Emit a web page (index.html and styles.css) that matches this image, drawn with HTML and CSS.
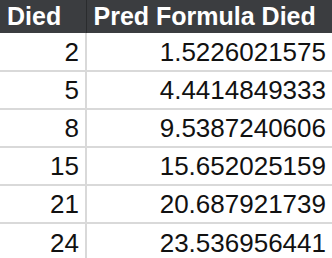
FILE: index.html
```html
<!DOCTYPE html>
<html>
<head>
<meta charset="utf-8">
<link rel="stylesheet" href="styles.css">
</head>
<body>
<table class="grid">
  <thead>
    <tr><th class="c1">Died</th><th class="c2">Pred Formula Died</th></tr>
  </thead>
  <tbody>
    <tr><td class="c1">2</td><td class="c2">1.5226021575</td></tr>
    <tr><td class="c1">5</td><td class="c2">4.4414849333</td></tr>
    <tr><td class="c1">8</td><td class="c2">9.5387240606</td></tr>
    <tr><td class="c1">15</td><td class="c2">15.652025159</td></tr>
    <tr><td class="c1">21</td><td class="c2">20.687921739</td></tr>
    <tr><td class="c1">24</td><td class="c2">23.536956441</td></tr>
  </tbody>
</table>
</body>
</html>
```
FILE: styles.css
```css
html, body {
  margin: 0;
  padding: 0;
  background: #ffffff;
}
.grid {
  border-collapse: collapse;
  table-layout: fixed;
  width: 332px;
  font-family: "Liberation Sans", Arial, sans-serif;
  color: #111111;
}
.grid th {
  background: #3b3d40;
  color: #ffffff;
  font-size: 25px;
  font-weight: bold;
  text-align: left;
  height: 33px;
  padding: 0 0 0 7px;
  line-height: 33px;
  box-sizing: border-box;
  border-right: 1px solid #2a2c2e;
}
.grid th.c2 {
  border-right: none;
}
.grid .c1 {
  width: 86px;
}
.grid td {
  font-size: 26px;
  text-align: right;
  height: 38px;
  padding: 0 6px 0 0;
  box-sizing: border-box;
  border-bottom: 2px solid #d9d9d9;
  border-right: 2px solid #d9d9d9;
  line-height: 36px;
}
.grid td.c2 {
  border-right: none;
}
.grid tbody tr:last-child td {
  border-bottom: none;
}
```
